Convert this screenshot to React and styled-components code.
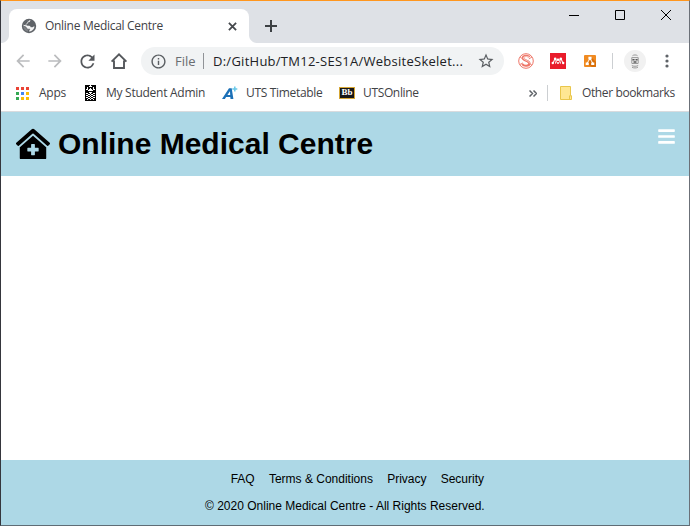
import React from 'react';
import styled, { createGlobalStyle } from 'styled-components';
import { MdArrowBack, MdArrowForward, MdRefresh, MdInfoOutline, MdStarBorder } from 'react-icons/md';
import { FaClinicMedical, FaBars } from 'react-icons/fa';

const GlobalStyle = createGlobalStyle`
  * { box-sizing: border-box; }
  body { margin: 0; background: #fff; }
  svg { display: block; flex: none; }
`;

const Window = styled.div`
  display: flex;
  flex-direction: column;
  width: 690px;
  height: 526px;
  overflow: hidden;
  background: #fff;
  border-style: solid;
  border-width: 1px;
  border-color: #ff961e #6b7078 #5f6c75 #35363d;
  font-family: 'Open Sans', 'Noto Sans', sans-serif;
`;

const TabStrip = styled.div`
  display: flex;
  flex: none;
  height: 42px;
  padding-top: 8px;
  background: #dee1e6;
`;

const Foot = styled.div`
  align-self: flex-end;
  width: 8px;
  height: 8px;
  background: radial-gradient(circle at ${({ $side }) => ($side === 'left' ? '0 0' : '8px 0')}, #dee1e6 7.5px, #fff 8.5px);
`;

const Tab = styled.div`
  display: flex;
  align-items: center;
  width: 240px;
  height: 34px;
  padding: 0 12px 0 12px;
  background: #fff;
  border-radius: 8px 8px 0 0;
`;

const Label = styled.span`
  flex: none;
  width: ${({ $w }) => $w}px;
  margin-left: ${({ $gap = 0 }) => $gap}px;
  color: ${({ $color = '#3f4246' }) => $color};
  font-size: ${({ $size = 12 }) => $size}px;
  letter-spacing: ${({ $track = 0 }) => $track}px;
  line-height: 18px;
  white-space: nowrap;
`;

const Spacer = styled.div`
  flex: 1;
`;

const NewTab = styled.div`
  padding: 11px 0 0 8px;
`;

const Controls = styled.div`
  display: flex;
  gap: 36px;
  padding: 1px 18px 0 0;
`;

const Toolbar = styled.div`
  display: flex;
  flex: none;
  align-items: center;
  height: 36px;
  padding: 0 13px 0 12px;
`;

const NavButton = styled.div`
  display: flex;
  align-items: center;
  justify-content: center;
  width: 20px;
  height: 20px;
  margin-right: 12px;
  color: ${({ $muted }) => ($muted ? '#bbbcbe' : '#55585c')};
`;

const AddressBar = styled.div`
  display: flex;
  align-items: center;
  width: 363px;
  height: 28px;
  padding: 0 9px;
  border-radius: 14px;
  background: #f1f3f4;
  color: #5a5e62;
`;

const Divider = styled.div`
  flex: none;
  width: 1px;
  height: 16px;
  margin-left: ${({ $gap }) => $gap}px;
  background: ${({ $dark }) => ($dark ? '#909397' : '#cccfd2')};
`;

const Slot = styled.div`
  flex: none;
  width: ${({ $w }) => $w}px;
  margin-left: ${({ $gap = 0 }) => $gap}px;
`;

const Avatar = styled.div`
  display: flex;
  align-items: center;
  justify-content: center;
  width: 22px;
  height: 22px;
  margin-left: 11px;
  border-radius: 50%;
  background: #f1f1f1;
`;

const Bookmarks = styled.div`
  display: flex;
  flex: none;
  align-items: center;
  height: 33px;
  padding: 0 14px 4px 15px;
  border-bottom: 1px solid #d9dbde;
`;

const AppsGrid = styled.div`
  display: grid;
  grid-template-columns: repeat(3, 3px);
  grid-auto-rows: 3px;
  gap: 2px;
`;

const AppDot = styled.i`
  background: ${({ $color }) => $color};
`;

const BbBadge = styled.div`
  width: 16px;
  height: 12px;
  margin-left: 17px;
  border: 1px solid #d6a634;
  background: #171717;
  color: #fff;
  font: bold 9px/9px 'Liberation Serif', serif;
  text-align: center;
`;

const Header = styled.header`
  display: flex;
  flex: none;
  justify-content: space-between;
  height: 64px;
  padding: 0 13px 0 15px;
  background: #add8e6;
`;

const Brand = styled.h1`
  display: flex;
  align-items: center;
  gap: 8px;
  height: 63px;
  margin: 0;
  color: #000;
  font: bold 30px/34px 'Liberation Sans', Arial, sans-serif;
`;

const MenuButton = styled.div`
  padding-top: 15px;
  color: #fff;
`;

const Content = styled.main`
  flex: 1;
  background: #fff;
`;

const Footer = styled.footer`
  flex: none;
  height: 65px;
  padding-top: 12px;
  background: #add8e6;
  color: #000;
  font: 12px/14px 'Liberation Sans', Arial, sans-serif;
`;

const FooterLinks = styled.nav`
  display: flex;
  gap: 14.2px;
  padding-left: 229.7px;
`;

const Copyright = styled.p`
  margin: 13px 0 0 204px;
`;

const dots = ['#ea4335', '#ea4335', '#ea4335', '#34a853', '#4285f4', '#fbbc05', '#34a853', '#fbbc05', '#fbbc05'];

const GlobeIcon = () => (
  <svg width="16" height="16" viewBox="0 0 16 16">
    <circle cx="8" cy="8" r="7.2" fill="#5f6368" />
    <path fill="#fff" d="M9.2 2.1c-.2 1-.3 1.7-1.5 1.8-.9.1-.8 1-.7 1.6-1.1 0-1.6.5-1.6 1.4 0 .8.8.9 1.8.9 1.7 0 2.4.8 2.3 1.8h1.9c1 0 1.5-.6 2.3-1.2A5.8 5.8 0 0 1 8 13.8V12c-1 0-1.5-.7-1.5-1.7L2.4 6.4A6 6 0 0 0 2.2 8c0 2.8 2 5.2 4.6 5.8L7 12 5.7 10.6 2.6 7.4z" opacity=".2" />
    <path fill="#fff" d="M9.4 2.3C9.3 3.5 8.7 4 7.5 4.2c-.8.1-.8.7-.8 1.3-.9.1-1.5.6-1.5 1.3 0 .8.7 1 1.9 1 1.9 0 2.7.6 2.5 1.5h1.1c1.4.1 1.6-.8 2.8-1-.3 2.8-2.4 5-5.2 5.3v-1.1c.8-.3 1-1 .8-1.7H7c-1 0-1.1-.8-1.5-1.5-.5-.9-1.8-1.2-3-1.9.4-2.9 3.1-5.7 6.9-5.1z" opacity=".92" />
    <path fill="#5f6368" d="M2.2 6.7C2.8 3.8 5 2.1 8.3 2.1 8.5 3.4 7 3.2 6.5 4.1c-.4.6.1 1.2-.8 1.4-.8.2-1 .8-1 1.7z" />
  </svg>
);

const HomeIcon = () => (
  <svg width="18" height="18" viewBox="0 0 18 18" fill="none" stroke="currentColor" strokeWidth="1.9">
    <path d="M1.6 9.7 9 2.3l7.4 7.4M4 8.5V16h10V8.5" />
  </svg>
);

const CrestIcon = () => (
  <svg width="11" height="16" viewBox="0 0 11 16" shapeRendering="crispEdges">
    <path fill="#050505" d="M0 0h11v16H0z" />
    <path fill="#fff" d="M5 0h1v2H5zM4 1h3v1H4zM2 2h1v2H2zM8 2h1v2H8zM5 3h1v2H5zM1 4h2v1H1zM4 4h3v1H4zM8 4h2v1H8zM3 5h5v1H3zM4 7h3v1H4zM1 8h2v1H1zM5 8h1v1H5zM8 8h2v1H8zM3 9h2v1H3zM6 9h2v1H6zM1 10h2v1H1zM5 10h1v1H5zM8 10h2v1H8zM3 11h2v1H3zM6 11h2v1H6zM1 12h2v1H1zM5 12h1v1H5zM8 12h2v1H8zM3 13h2v1H3zM6 13h2v1H6zM2 14h1v1H2zM5 14h1v1H5zM8 14h1v1H8z" />
  </svg>
);

const TimetableIcon = () => (
  <svg width="16" height="14" viewBox="0 0 16 14">
    <path fill="#1c70b7" fillRule="evenodd" d="M7 2.2h2.7l1.7 10.9H8.5l-.2-2H4.1l-1.2 2H0zM8 5.2 5.4 9h2.8z" />
    <path stroke="#69c9e9" strokeWidth="1.5" d="M12.8.4v5M10.3 2.9h5" />
  </svg>
);

const ScriptIcon = () => (
  <svg width="16" height="16" viewBox="0 0 16 16" fill="none" stroke="#ee7668">
    <circle cx="8" cy="8" r="7.3" />
    <path strokeWidth="2.2" d="M11.6 4.1C9.6 2 4.8 2.7 4.9 5.1c.1 2.6 6.6 2.3 6.5 5.3-.1 3-5.5 3-7.2.7" />
    <path strokeWidth=".9" d="M2.2 4.2 13.8 12M2 11.4l3-1.5M10.8 6l3.2-2" />
    <path stroke="#fff" strokeWidth=".6" d="M11 4C9 3 5.3 3.2 5.4 5.1c.1 2 6.2 2.5 6 5.2" />
  </svg>
);

const MendeleyIcon = () => (
  <svg width="16" height="16" viewBox="0 0 16 16">
    <path fill="#e91c2b" d="M0 0h16v16H0z" />
    <g fill="#fff">
      <circle cx="5.2" cy="5.7" r="1.3" />
      <circle cx="8" cy="6.8" r="1.3" />
      <circle cx="10.8" cy="5.7" r="1.3" />
      <circle cx="2.8" cy="10" r="1.2" />
      <circle cx="8" cy="10" r="1" />
      <circle cx="13.2" cy="10" r="1.2" />
    </g>
    <path fill="none" stroke="#fff" strokeWidth="1.1" d="M3 9.8c1.3-.9.7-2.6 2.1-4M13 9.8c-1.3-.9-.7-2.6-2.1-4M5.6 6.2c1.1 1.4.7 2.8-.2 4.3M10.4 6.2c-1.1 1.4-.7 2.8.2 4.3" />
  </svg>
);

const DiagramIcon = () => (
  <svg width="12" height="12" viewBox="0 0 12 12">
    <rect width="12" height="12" rx="1" fill="#f08a20" />
    <path fill="#d96f08" d="m7 2 5 5v4.5L11.5 12H8L3 9z" />
    <path fill="none" stroke="#fff" strokeWidth="1" d="M3.2 8.2 6 3.5l2.8 4.7" />
    <path fill="#fff" d="M4.4 1.7h3.2v2.7H4.4zM1.7 7.4h3.1V10H1.7zM7.2 7.4h3.1V10H7.2z" />
  </svg>
);

const AvatarDrawing = () => (
  <svg width="8" height="15" viewBox="0 0 8 15" fill="none" stroke="#999">
    <path d="M1.5 1.7c1.2-1 3.8-1 5 0M.5 3.6h7M.8 4v5.5M7.2 4v5.5M1 9.5h6M.8 11.5c1 1 5.4 1 6.4 0M1 13.2c1.4 1 4.6 1 6 0" />
    <path stroke="#555" strokeWidth="1.4" d="M1.4 5.8h2.2M4.5 5.8h2.1M2.5 8h3" />
  </svg>
);

const FolderIcon = () => (
  <svg width="12" height="14" viewBox="0 0 12 14">
    <path fill="#ffe793" stroke="#e9c64b" d="M.5.5h10v9.2h1v3.8H.5z" />
    <path fill="none" stroke="#e9c64b" d="M9.5 13V9.8h1.2" />
  </svg>
);

export default function App() {
  return (
    <>
      <GlobalStyle />
      <Window>
        <TabStrip>
          <Foot $side="left" />
          <Tab>
            <GlobeIcon />
            <Label $gap={8} $w={118} $track={-0.29}>Online Medical Centre</Label>
            <Spacer />
            <svg width="9" height="9" viewBox="0 0 9 9" stroke="#45484c" strokeWidth="1.8"><path d="m.9.9 7.2 7.2m0-7.2L.9 8.1" /></svg>
          </Tab>
          <Foot $side="right" />
          <NewTab>
            <svg width="12" height="12" viewBox="0 0 12 12" stroke="#3c4043" strokeWidth="2"><path d="M6 0v12M0 6h12" /></svg>
          </NewTab>
          <Spacer />
          <Controls>
            <svg width="10" height="11" viewBox="0 0 10 11" stroke="#000"><path d="M0 5.5h10" /></svg>
            <svg width="10" height="10" viewBox="0 0 10 10" fill="none" stroke="#000"><path d="M.5.5h9v9h-9z" /></svg>
            <svg width="10" height="10" viewBox="0 0 10 10" stroke="#000"><path d="m0 0 10 10M10 0 0 10" /></svg>
          </Controls>
        </TabStrip>
        <Toolbar>
          <NavButton $muted><MdArrowBack size={20} /></NavButton>
          <NavButton $muted><MdArrowForward size={20} /></NavButton>
          <NavButton><MdRefresh size={21} /></NavButton>
          <NavButton><HomeIcon /></NavButton>
          <AddressBar>
            <MdInfoOutline size={17} />
            <Label $gap={8} $w={21} $size={13} $color="#6a6d71">File</Label>
            <Divider $gap={7} $dark />
            <Label $gap={9} $w={250} $size={13} $track={0.26} $color="#202124">D:/GitHub/TM12-SES1A/WebsiteSkelet...</Label>
            <Spacer />
            <MdStarBorder size={18} />
          </AddressBar>
          <Slot $gap={14} $w={16}><ScriptIcon /></Slot>
          <Slot $gap={16} $w={16}><MendeleyIcon /></Slot>
          <Slot $gap={18} $w={12}><DiagramIcon /></Slot>
          <Divider $gap={16} />
          <Avatar><AvatarDrawing /></Avatar>
          <Slot $gap={19} $w={4}>
            <svg width="4" height="14" viewBox="0 0 4 14" fill="#5f6368"><circle cx="2" cy="2" r="1.6" /><circle cx="2" cy="7" r="1.6" /><circle cx="2" cy="12" r="1.6" /></svg>
          </Slot>
        </Toolbar>
        <Bookmarks>
          <AppsGrid>{dots.map((color, i) => <AppDot key={i} $color={color} />)}</AppsGrid>
          <Label $gap={10} $w={27} $track={-0.25}>Apps</Label>
          <Slot $gap={19} $w={11}><CrestIcon /></Slot>
          <Label $gap={10} $w={99} $track={-0.27}>My Student Admin</Label>
          <Slot $gap={17} $w={16}><TimetableIcon /></Slot>
          <Label $gap={8} $w={76} $track={-0.32}>UTS Timetable</Label>
          <BbBadge>Bb</BbBadge>
          <Label $gap={8} $w={56} $track={-0.35}>UTSOnline</Label>
          <Spacer />
          <svg width="8" height="7" viewBox="0 0 8 7" fill="none" stroke="#5f6368" strokeWidth="1.5"><path d="m.5.5 3 3-3 3m4-6 3 3-3 3" /></svg>
          <Divider $gap={10} />
          <Slot $gap={12} $w={12}><FolderIcon /></Slot>
          <Label $gap={10} $w={93} $track={-0.38}>Other bookmarks</Label>
        </Bookmarks>
        <Header>
          <Brand><FaClinicMedical size={34} />Online Medical Centre</Brand>
          <MenuButton><FaBars size={19} /></MenuButton>
        </Header>
        <Content />
        <Footer>
          <FooterLinks><span>FAQ</span><span>Terms &amp; Conditions</span><span>Privacy</span><span>Security</span></FooterLinks>
          <Copyright>© 2020 Online Medical Centre - All Rights Reserved.</Copyright>
        </Footer>
      </Window>
    </>
  );
}
